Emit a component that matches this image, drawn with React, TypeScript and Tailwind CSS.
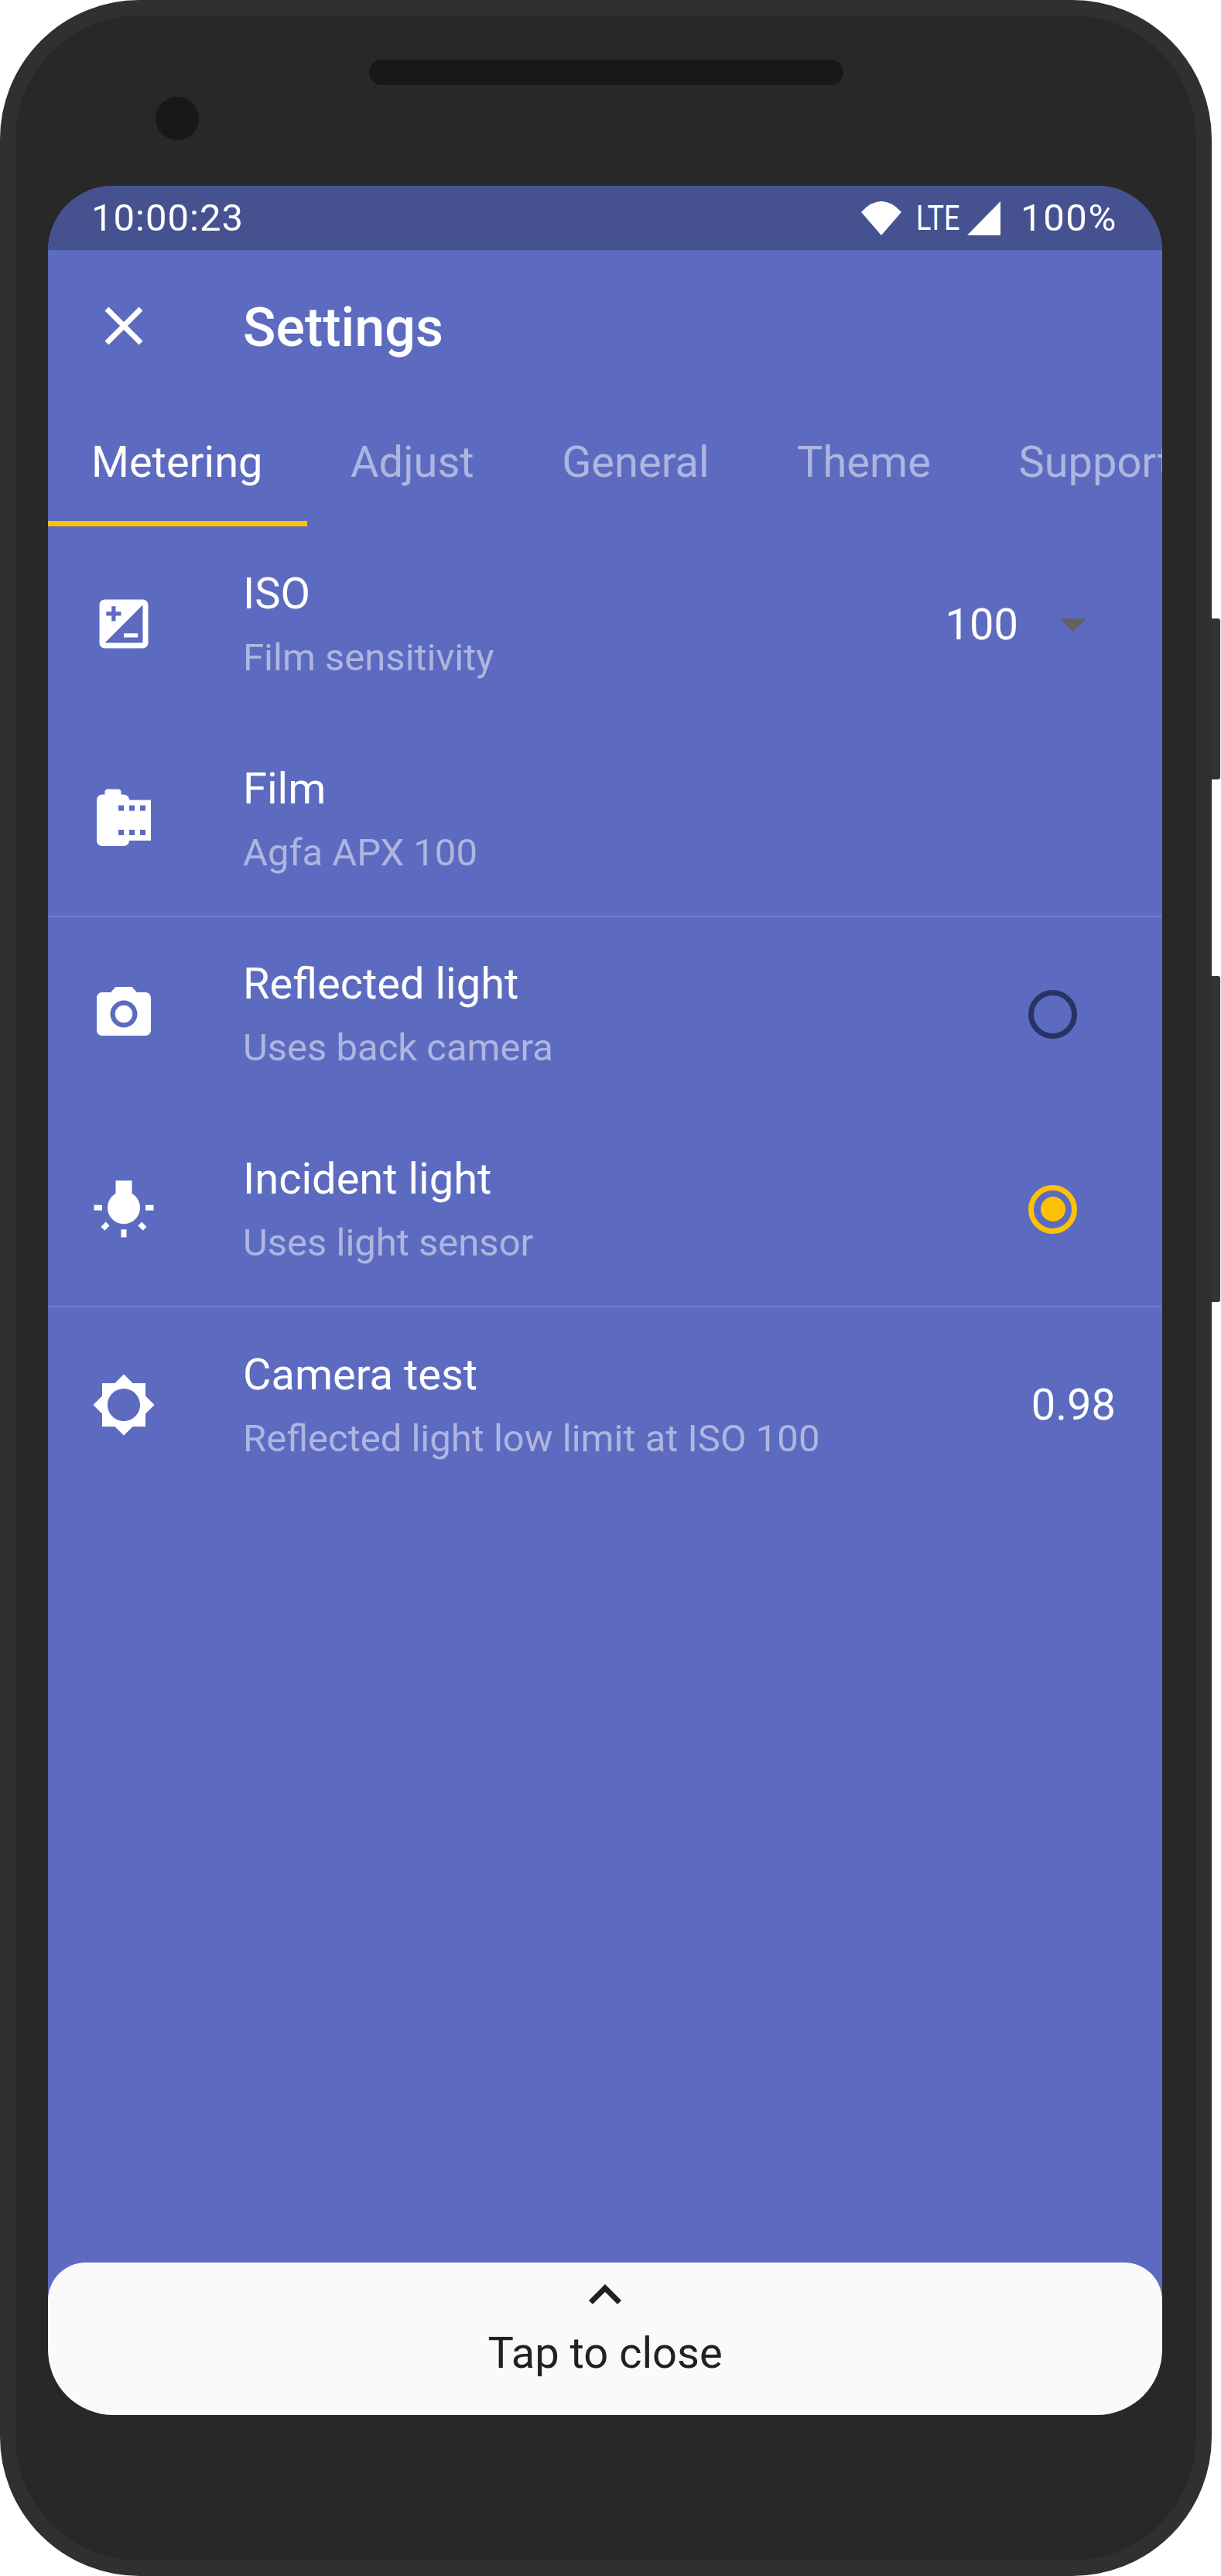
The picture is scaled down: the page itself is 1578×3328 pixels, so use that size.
import React from "react";

function Icon({ d, size = 84, fill = "#fff" }: { d: string; size?: number; fill?: string }) {
  return (
    <svg width={size} height={size} viewBox="0 0 24 24" className="shrink-0 block" fill={fill}>
      <path d={d} fillRule="evenodd" />
    </svg>
  );
}

const ICONS = {
  close: "M19 6.41L17.59 5 12 10.59 6.41 5 5 6.41 10.59 12 5 17.59 6.41 19 12 13.41 17.59 19 19 17.59 13.41 12 19 6.41z",
  roll: "M14 5c0-1.1-.9-2-2-2h-1V2c0-.55-.45-1-1-1H6c-.55 0-1 .45-1 1v1H4c-1.1 0-2 .9-2 2v15c0 1.1.9 2 2 2h8c1.1 0 2-.9 2-2h8V5h-8zm-2 13h-2v-2h2v2zm0-9h-2V7h2v2zm4 9h-2v-2h2v2zm0-9h-2V7h2v2zm4 9h-2v-2h2v2zm0-9h-2V7h2v2z",
  bulb: "M3.55 18.54l1.41 1.41 1.79-1.8-1.41-1.41-1.79 1.8zM11 22.45h2V19.5h-2v2.95zM4 10.5H1v2h3v-2zm11-4.19V1.5H9v4.81C7.21 7.35 6 9.28 6 11.5c0 3.31 2.69 6 6 6s6-2.69 6-6c0-2.22-1.21-4.15-3-5.19zm5 4.19v2h3v-2h-3zm-2.76 7.66l1.79 1.8 1.41-1.41-1.8-1.79-1.4 1.4z",
  sun: "M20 15.31L23.31 12 20 8.69V4h-4.69L12 .69 8.69 4H4v4.69L.69 12 4 15.31V20h4.69L12 23.31 15.31 20H20v-4.69zM12 18c-3.31 0-6-2.69-6-6s2.69-6 6-6 6 2.69 6 6-2.69 6-6 6z",
  up: "M7.41 15.41L12 10.83l4.59 4.58L18 14l-6-6-6 6z",
};

function CameraIcon() {
  return (
    <svg width={84} height={84} viewBox="0 0 24 24" className="shrink-0 block" fill="#fff">
      <path
        fillRule="evenodd"
        d="M9 2L7.17 4H4c-1.1 0-2 .9-2 2v12c0 1.1.9 2 2 2h16c1.1 0 2-.9 2-2V6c0-1.1-.9-2-2-2h-3.17L15 2H9zm3 15c-2.76 0-5-2.24-5-5s2.24-5 5-5 5 2.24 5 5-2.24 5-5 5z"
      />
      <circle cx="12" cy="12" r="3.2" />
    </svg>
  );
}

function ExposureIcon() {
  return (
    <svg width={84} height={84} viewBox="0 0 24 24" className="shrink-0 block" fill="#fff">
      <path
        fillRule="evenodd"
        d="M19 3H5c-1.1 0-2 .9-2 2v14c0 1.1.9 2 2 2h14c1.1 0 2-.9 2-2V5c0-1.1-.9-2-2-2zM19 5v14H5L19 5zM7.5 7.5V5.5H9v2h2V9H9v2H7.5V9h-2V7.5h2z"
      />
      <path d="M12 15.5h5.2V17H12z" />
    </svg>
  );
}

function Row({
  icon,
  title,
  subtitle,
  children,
}: {
  icon: React.ReactNode;
  title: string;
  subtitle: string;
  children?: React.ReactNode;
}) {
  return (
    <div className="flex h-[252px] shrink-0 items-center pl-14">
      {icon}
      <div className="ml-[112px] flex min-w-0 flex-col pt-[4px]">
        <div className="h-[84px] text-[56px] leading-[84px] text-white">{title}</div>
        <div className="h-[82px] text-[49px] leading-[82px] text-white/50">{subtitle}</div>
      </div>
      {children}
    </div>
  );
}

function Divider() {
  return <div className="relative -my-px h-[2px] shrink-0 bg-white/[0.12]" />;
}

function Radio({ checked }: { checked?: boolean }) {
  return (
    <div
      className={
        checked
          ? "mr-[110px] ml-auto flex h-[63px] w-[63px] items-center justify-center rounded-full border-[7px] border-[#ffc107]"
          : "mr-[110px] ml-auto h-[63px] w-[63px] rounded-full border-[7px] border-[#283364]"
      }
    >
      {checked && <div className="h-[32px] w-[32px] rounded-full bg-[#ffc107]" />}
    </div>
  );
}

function Tab({ label, active }: { label: string; active?: boolean }) {
  return (
    <div className="relative flex h-[161px] shrink-0 items-center pr-[57.5px] pb-[6px] pl-14">
      <span className={active ? "text-[56px] text-white" : "text-[56px] text-white/50"}>{label}</span>
      {active && <div className="absolute inset-x-0 bottom-0 h-[7px] bg-[#ffc107]" />}
    </div>
  );
}

export default function App() {
  return (
    <div className="flex h-[3328px] w-[1578px] items-start overflow-hidden bg-white font-[Roboto,sans-serif]">
      {/* Phone body */}
      <div className="h-[3328px] w-[1566px] shrink-0 rounded-[180px] border-[20px] border-[#303030] bg-[#282828]">
        <div className="flex h-[220px] flex-col pt-[57px]">
          <div className="mx-auto h-[33px] w-[613px] rounded-[17px] bg-[#181818]" />
          <div className="mt-[15px] ml-[181px] h-[56px] w-[56px] rounded-full bg-[#181818]" />
        </div>

        {/* Screen */}
        <div className="mx-[42px] flex h-[2880px] w-[1440px] flex-col overflow-hidden rounded-[84px] bg-[#5c6bc0]">
          {/* Status bar */}
          <div className="flex h-[83px] shrink-0 items-center bg-[#465290] pr-[58px] pl-14 text-white">
            <span className="text-[49px] font-[450] tracking-[1px]">10:00:23</span>
            <svg width={52} height={44} viewBox="0 0 52 44" className="ml-auto shrink-0" fill="#fff">
              <path d="M26 44L0 14Q26 -14 52 14Z" />
            </svg>
            <span className="ml-[19px] w-[57px] shrink-0 origin-left scale-x-[0.8] text-[45px] leading-none">LTE</span>
            <svg width={43} height={44} viewBox="0 0 43 44" className="ml-[9px] shrink-0" fill="#fff">
              <path d="M43 0V44H0Z" />
            </svg>
            <span className="ml-[26px] text-[49px] font-[450] tracking-[1.6px]">100%</span>
          </div>

          {/* App bar */}
          <div className="flex h-[196px] shrink-0 items-center pl-14">
            <Icon d={ICONS.close} />
            <span className="mt-[5px] ml-[112px] text-[70px] font-medium text-white">Settings</span>
          </div>

          {/* Tabs */}
          <div className="flex shrink-0 overflow-hidden whitespace-nowrap">
            <Tab label="Metering" active />
            <Tab label="Adjust" />
            <Tab label="General" />
            <Tab label="Theme" />
            <Tab label="Support" />
          </div>

          {/* List */}
          <Row icon={<ExposureIcon />} title="ISO" subtitle="Film sensitivity">
            <div className="ml-auto flex items-center pt-[2px] pr-[98px]">
              <span className="text-[56px] text-white">100</span>
              <svg width={34} height={17} viewBox="0 0 34 17" className="ml-[54px]" fill="#616161">
                <path d="M0 0H34L17 17Z" />
              </svg>
            </div>
          </Row>
          <Row icon={<Icon d={ICONS.roll} />} title="Film" subtitle="Agfa APX 100" />
          <Divider />
          <Row icon={<CameraIcon />} title="Reflected light" subtitle="Uses back camera">
            <Radio />
          </Row>
          <Row icon={<Icon d={ICONS.bulb} />} title="Incident light" subtitle="Uses light sensor">
            <Radio checked />
          </Row>
          <Divider />
          <div className="h-px shrink-0" />
          <Row icon={<Icon d={ICONS.sun} />} title="Camera test" subtitle="Reflected light low limit at ISO 100">
            <span className="mr-[60px] ml-auto text-[56px] text-white">0.98</span>
          </Row>

          {/* Close panel */}
          <div className="mt-auto flex h-[197px] shrink-0 flex-col items-center rounded-t-[49px] rounded-b-[84px] bg-[#fafafa]">
            <Icon d={ICONS.up} fill="#212121" />
            <span className="text-[56px] leading-[66px] text-[#212121]">Tap to close</span>
          </div>
        </div>
      </div>

      {/* Side buttons */}
      <div className="flex w-[11px] shrink-0 flex-col">
        <div className="mt-[799px] h-[208px] rounded-r-[3px] bg-[#333333]" />
        <div className="mt-[254px] h-[421px] rounded-r-[3px] bg-[#333333]" />
      </div>
    </div>
  );
}
